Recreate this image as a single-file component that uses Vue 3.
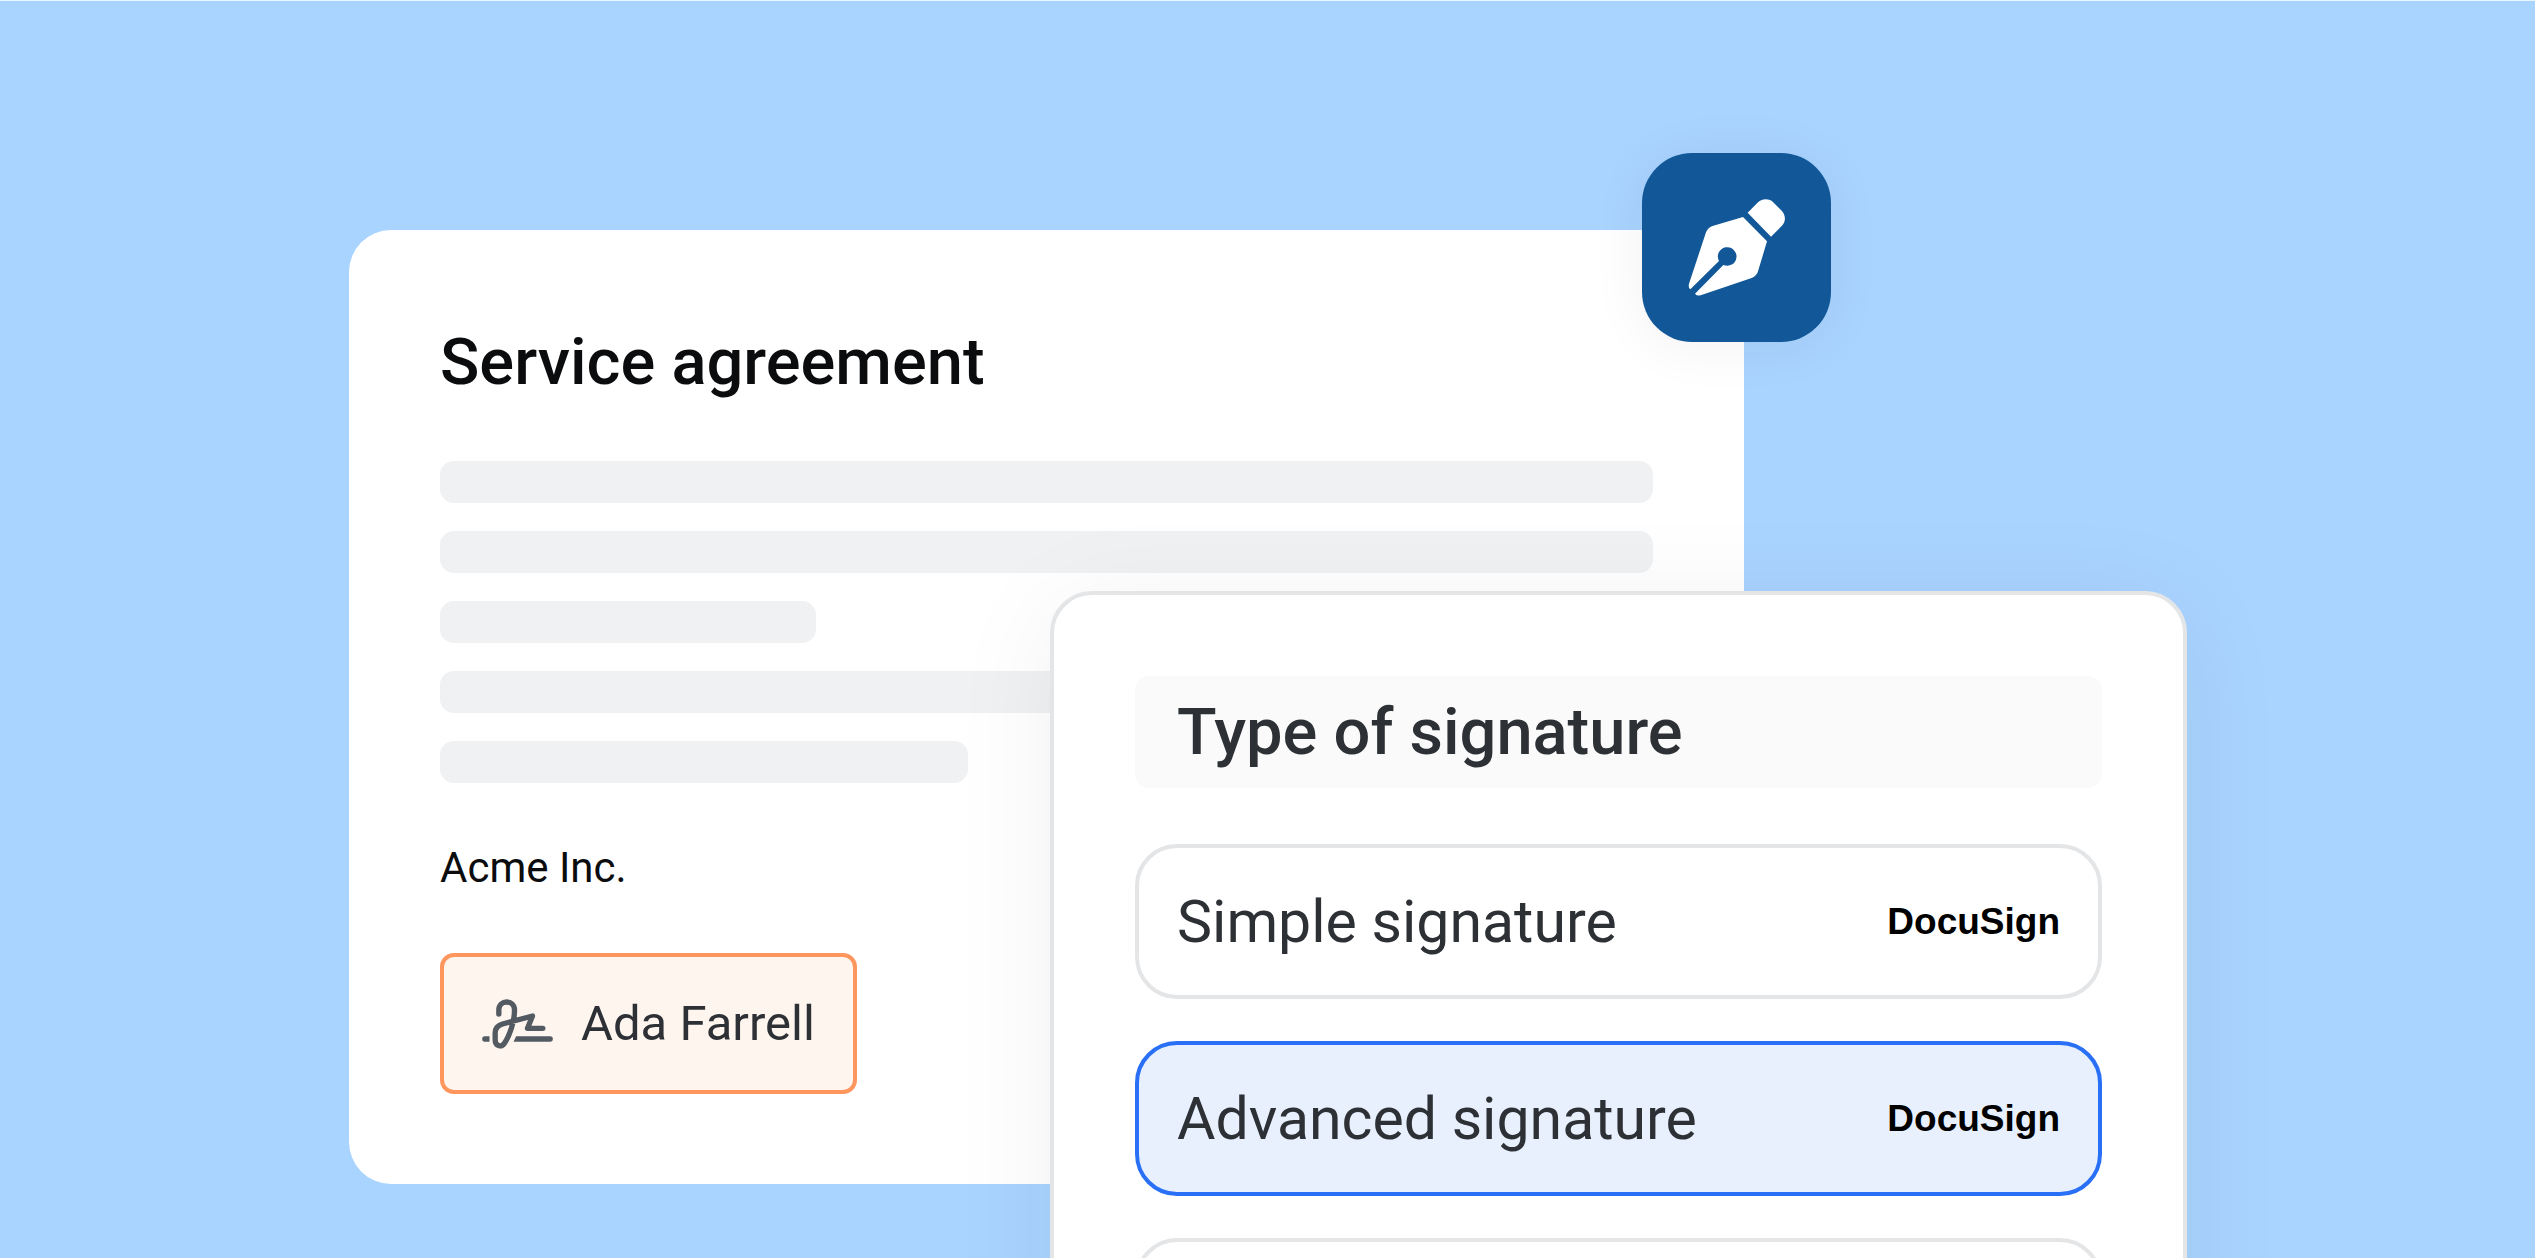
<script setup>
import { ref } from 'vue'

const lines = [100, 100, 31, 100, 43.5]

const options = [
  { id: 'simple', label: 'Simple signature', provider: 'DocuSign' },
  { id: 'advanced', label: 'Advanced signature', provider: 'DocuSign' },
  { id: 'other', label: '', provider: '' },
]

const selected = ref('advanced')
</script>

<template>
  <main class="page">
    <article class="document">
      <h1 class="title">Service agreement</h1>
      <div class="lines" aria-hidden="true">
        <span v-for="(width, i) in lines" :key="i" class="line" :style="{ width: width + '%' }"></span>
      </div>
      <p class="company">Acme Inc.</p>
      <button type="button" class="signer">
        <svg class="signer-icon" viewBox="184 535 212 150" aria-hidden="true">
          <path
            class="stroke"
            d="M234 580 V568 C234 536 281 536 281 568 C281 606 264 650 250 669 C241 681 223 676 223 658 V636 C223 622 230 615 245 610 L335 586 L320 623 H366"
          />
          <path d="M206 647 H192 a8 8 0 0 0 0 16 H206 Z" />
          <path d="M286 647 H388 a8 8 0 0 1 0 16 H278 Z" />
        </svg>
        <span>Ada Farrell</span>
      </button>
      <div class="badge">
        <svg viewBox="66 68 567 567" aria-hidden="true">
          <path d="M383 247 L411 219 C425 204 447 203 461 217 L485 241 C498 255 498 274 485 287 L453 319 Z" />
          <path
            d="M369 260 L441 333 L415 420 Q411 437 395 443 L242 495 Q231 498 225 490 L310 404 A28 28 0 1 0 297 392 L211 477 Q204 474 207 460 L258 306 Q263 291 280 286 Z"
          />
        </svg>
      </div>
    </article>

    <section class="panel" aria-labelledby="panel-title">
      <h2 id="panel-title" class="panel-title">Type of signature</h2>
      <div class="options" role="radiogroup" aria-labelledby="panel-title">
        <label v-for="option in options" :key="option.id" class="option" :class="{ selected: selected === option.id }">
          <input
            v-model="selected"
            class="radio"
            type="radio"
            name="signature"
            :value="option.id"
            :aria-label="option.label || 'Other'"
          />
          <span>{{ option.label }}</span>
          <span class="provider">{{ option.provider }}</span>
        </label>
      </div>
    </section>
  </main>
</template>

<style>
body {
  margin: 0;
  background: #a9d4ff;
}
</style>

<style scoped>
.page {
  box-sizing: border-box;
  display: grid;
  grid-template-columns:
    minmax(0, 349fr) minmax(0, 701fr) minmax(0, 694fr)
    minmax(0, 443fr) minmax(0, 348fr);
  grid-template-rows: 229px 361px auto auto;
  align-items: start;
  height: 100vh;
  overflow: hidden;
  border-top: 1px solid #ebf5ff;
  background: #a9d4ff;
  font-family: Roboto, 'Liberation Sans', sans-serif;
  color: #2d3035;
}

.document {
  position: relative;
  grid-column: 2 / 4;
  grid-row: 2 / 4;
  box-sizing: border-box;
  display: flex;
  flex-direction: column;
  align-items: flex-start;
  gap: 57px;
  padding: 90px 91px;
  border-radius: 42px;
  background: #fff;
  color: #0b0c0e;
}

.title {
  margin: 0;
  font-size: 65px;
  line-height: 84px;
  font-weight: 500;
}

.lines {
  display: flex;
  flex-direction: column;
  gap: 28px;
  width: 100%;
}

.line {
  height: 42px;
  border-radius: 14px;
  background: #f0f1f3;
}

.company {
  margin: 0;
  font-size: 42px;
  line-height: 56px;
}

.signer {
  box-sizing: border-box;
  display: flex;
  align-items: center;
  gap: 28px;
  height: 141px;
  padding: 0 38px;
  border: 4px solid #ff965e;
  border-radius: 14px;
  background: #fff5ef;
  font: inherit;
  font-size: 49px;
  line-height: 56px;
  color: #2d3035;
}

.signer-icon {
  width: 71px;
  height: 50px;
  fill: #535a61;
}

.stroke {
  fill: none;
  stroke: #535a61;
  stroke-width: 16;
  stroke-linecap: round;
  stroke-linejoin: round;
}

.badge {
  position: absolute;
  top: -77px;
  right: -87px;
  width: 189px;
  height: 189px;
  border-radius: 50px;
  background: #125899;
  box-shadow: 0 4px 56px rgba(0, 0, 0, 0.06);
}

.badge svg {
  display: block;
  width: 100%;
  height: 100%;
  fill: #fff;
}

.panel {
  position: relative;
  grid-column: 3 / 5;
  grid-row: 3 / 5;
  box-sizing: border-box;
  display: flex;
  flex-direction: column;
  gap: 56px;
  padding: 81px;
  border: 4px solid #e4e5e7;
  border-radius: 42px;
  background: #fff;
  box-shadow: 0 14px 112px rgba(0, 0, 0, 0.06);
}

.panel-title {
  margin: 0;
  padding: 0 42px;
  border-radius: 14px;
  background: #fafafa;
  font-size: 65px;
  line-height: 112px;
  font-weight: 500;
}

.options {
  display: flex;
  flex-direction: column;
  gap: 42px;
}

.option {
  position: relative;
  box-sizing: border-box;
  display: flex;
  align-items: center;
  justify-content: space-between;
  height: 155px;
  padding: 0 38px;
  border: 4px solid #e4e5e7;
  border-radius: 42px;
  background: #fff;
  font-size: 59px;
  line-height: 84px;
}

.option.selected {
  border-color: #2970f6;
  background: #e8f0fe;
}

.radio {
  position: absolute;
  inset: 0;
  margin: 0;
  opacity: 0;
}

.provider {
  font-family: 'Liberation Sans', Arial, sans-serif;
  font-size: 37px;
  line-height: 42px;
  font-weight: 700;
  color: #000;
}
</style>
